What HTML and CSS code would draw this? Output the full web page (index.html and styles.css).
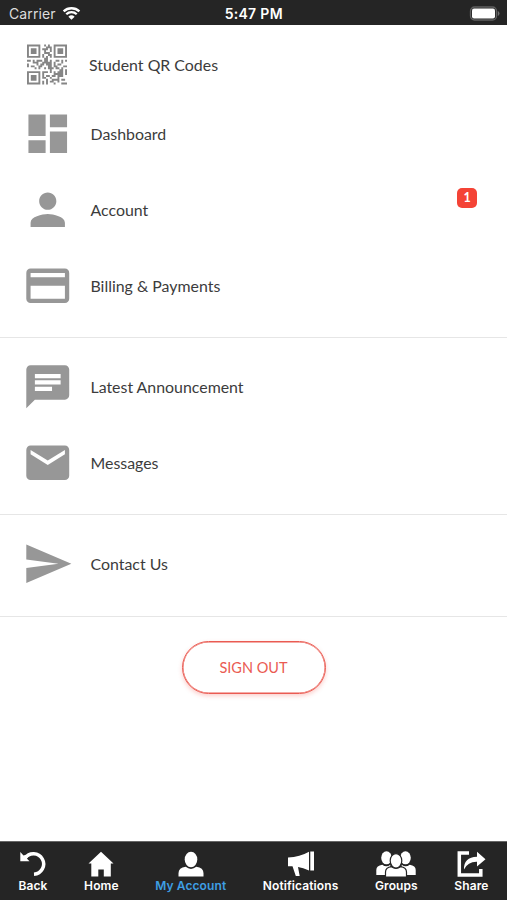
FILE: index.html
```html
<!DOCTYPE html>
<html lang="en">
<head>
<meta charset="utf-8">
<title>My Account</title>
<link rel="stylesheet" href="styles.css">
</head>
<body>
<header class="status">
  <div class="carrier"><span>Carrier</span>
    <svg class="wifi" viewBox="0 0 20 15"><path d="M1.7 5.3a12 12 0 0 1 16.6 0" /><path d="M4.5 8.3a8 8 0 0 1 11 0" /><path class="solid" d="M10 14.2 6.7 10.8a4.8 4.8 0 0 1 6.6 0Z"/></svg>
  </div>
  <div class="time">5:47 PM</div>
  <svg class="battery" viewBox="0 0 31 15"><rect class="shell" x="1.500" y="1" width="26" height="13" rx="4"/><rect class="charge" x="3" y="2.500" width="23" height="10" rx="2"/><path class="tip" d="M28.800 5v5q1.700-.8 1.700-2.500T28.800 5Z"/></svg>
</header>
<main>
  <nav class="group">
    <a class="row row-qr">
      <svg class="icon qr" viewBox="0 0 21 21"><path d="M.5.5h6v6h-6zM14.500.5h6v6h-6zM.5 14.500h6v6h-6z" class="ring"/><path d="M2 2h3v3H2zM16 2h3v3h-3zM2 16h3v3H2zM9 0h1v1H9zM11 0h1v2h-1zM8 2h2v1H8zM12 1h1v2h-1zM9 3h1v2H9zM10 4h2v1h-2zM12 3h1v1h-1zM8 5h1v2H8zM10 6h1v1h-1zM12 5h1v2h-1zM0 8h2v1H0zM3 8h1v2H3zM5 8h3v1H5zM9 7h2v2H9zM12 8h1v1h-1zM15 8h2v1h-2zM18 8h1v2h-1zM20 8h1v1h-1zM0 10h1v2H0zM2 11h2v1H2zM5 10h1v1H5zM6 11h2v1H6zM8 9h3v1H8zM10 10h3v1h-3zM14 9h1v2h-1zM16 10h2v1h-2zM19 11h2v1h-2zM4 12h1v1H4zM6 12h1v1H6zM9 12h1v1H9zM11 12h3v1h-3zM15 12h2v1h-2zM18 12h1v2h-1zM8 14h3v1H8zM12 13h1v2h-1zM14 14h1v2h-1zM16 14h1v1h-1zM20 13h1v3h-1zM8 15h1v3H8zM10 16h2v1h-2zM13 16h2v1h-2zM15 15h1v1h-1zM16 16h3v1h-3zM10 18h1v3h-1zM8 19h1v2H8zM12 17h1v1h-1zM12 19h2v1h-2zM14 18h2v1h-2zM16 17h1v3h-1zM18 18h2v1h-2zM18 20h3v1h-3zM14 20h1v1h-1zM4 9h2v1H4zM7 10h2v1H7zM11 9h2v1h-2zM11 11h2v1h-2zM14 11h2v1h-2zM17 13h2v2h-2zM16 15h3v1h-3zM13 18h1v1h-1zM9 17h1v1H9zM11 5h1v1h-1zM10 1h1v2h-1z"/></svg>
      <span>Student QR Codes</span>
    </a>
    <a class="row"><svg class="icon" viewBox="0 0 24 24"><path d="M3 13h8V3H3v10zm0 8h8v-6H3v6zm10 0h8V11h-8v10zm0-18v6h8V3h-8z"/></svg><span>Dashboard</span></a>
    <a class="row"><svg class="icon" viewBox="0 0 24 24"><path d="M12 12c2.210 0 4-1.790 4-4s-1.790-4-4-4-4 1.790-4 4 1.790 4 4 4zm0 2c-2.670 0-8 1.340-8 4v2h16v-2c0-2.660-5.330-4-8-4z"/></svg><span>Account</span><b class="badge">1</b></a>
    <a class="row"><svg class="icon" viewBox="0 0 24 24"><path d="M20 4H4c-1.110 0-1.990.89-1.990 2L2 18c0 1.110.89 2 2 2h16c1.110 0 2-.89 2-2V6c0-1.110-.89-2-2-2zm0 14H4v-6h16v6zm0-10H4V6h16v2z"/></svg><span>Billing &amp; Payments</span></a>
  </nav>
  <nav class="group">
    <a class="row"><svg class="icon" viewBox="0 0 24 24"><path d="M20 2H4c-1.100 0-1.990.9-1.990 2L2 22l4-4h14c1.100 0 2-.9 2-2V4c0-1.100-.9-2-2-2zM6 9h12v2H6V9zm8 5H6v-2h8v2zm4-6H6V6h12v2z"/></svg><span>Latest Announcement</span></a>
    <a class="row"><svg class="icon" viewBox="0 0 24 24"><path d="M20 4H4c-1.100 0-1.990.9-1.990 2L2 18c0 1.100.9 2 2 2h16c1.100 0 2-.9 2-2V6c0-1.100-.9-2-2-2zm0 4l-8 5-8-5V6l8 5 8-5v2z"/></svg><span>Messages</span></a>
  </nav>
  <nav class="group">
    <a class="row"><svg class="icon" viewBox="0 0 24 24"><path d="M2.010 21L23 12 2.010 3 2 10l15 2-15 2z"/></svg><span>Contact Us</span></a>
  </nav>
  <button class="signout">SIGN OUT</button>
</main>
<footer class="tabs">
  <a class="tab back"><svg viewBox="0 0 26 26"><path class="arc" d="M5 7.300A10.200 10.200 0 1 1 14 23.200"/><path d="M.3 1v9.300h9.200L6.800 7.500l1.500-1.800-2.200-1.900L3.500 4.500z"/></svg><span>Back</span></a>
  <a class="tab home"><svg viewBox="0 0 26 26"><path d="M13 .8 25.500 12.500H22.800V25.500H15.800V18.500H10.300V25.500H3.300V12.500H.5Z"/></svg><span>Home</span></a>
  <a class="tab account active"><svg viewBox="0 0 26 26"><ellipse cx="13" cy="8.500" rx="6.300" ry="7.800"/><path d="M.5 25.500v-3.200q0-5.800 7.200-6.500Q13 20 18.300 15.800q7.200.7 7.200 6.500v3.200Z"/></svg><span>My Account</span></a>
  <a class="tab notes"><svg viewBox="0 0 28 26"><path d="M1 6.500Q13 6 22 .8V19.500Q16 16.800 11 16l1.700 9H8.800L5.500 15.300H1ZM23.300.5h3.700v19h-3.700Z"/></svg><span>Notifications</span></a>
  <a class="tab groups"><svg viewBox="0 0 40 26"><ellipse cx="10.500" cy="6.800" rx="5.300" ry="6.500"/><ellipse cx="29.500" cy="6.800" rx="5.300" ry="6.500"/><path d="M.3 24v-5q0-4.500 6-5.300 4 3 8 0V24ZM39.700 24v-5q0-4.500-6-5.300-4 3-8 0V24Z"/><path class="front" d="M9.500 26v-5q0-4.500 6-5.300Q20 19 24.500 15.700 30.500 16.500 30.500 21v5Z"/><ellipse class="front" cx="20" cy="9.800" rx="5.800" ry="7.200"/></svg><span>Groups</span></a>
  <a class="tab share"><svg viewBox="0 0 29 26"><path class="box" d="M12 2H2.300v22h21.500v-6"/><path d="M7 18.500Q6.500 6.300 20 5.800V.8L28.500 8.300 20 15.500V10.800Q11 10.500 7 18.500Z"/></svg><span>Share</span></a>
</footer>
</body>
</html>
```
FILE: styles.css
```css
* { box-sizing: border-box; }
body {
  margin: 0;
  height: 900px;
  display: flex;
  flex-direction: column;
  background: #fff;
  overflow: hidden;
  font-family: Lato, sans-serif;
  color: #3c3c3c;
}
.status {
  height: 25px;
  flex: none;
  background: #252525;
  color: #fff;
  display: grid;
  grid-template-columns: 1fr auto 1fr;
  align-items: center;
  padding: 2px 7px 0 9px;
  font: 14px/20px Inter, sans-serif;
}
.carrier { display: flex; align-items: center; gap: 6px; color: #ddd; letter-spacing: .1px; }
.wifi { width: 19px; height: 15px; fill: none; stroke: #fff; stroke-width: 2.500; }
.wifi .solid { fill: #fff; stroke: none; }
.time { font-weight: 600; letter-spacing: .3px; margin-right: 1.500px; }
.battery { width: 31px; height: 15px; justify-self: end; }
.shell { fill: none; stroke: #606060; stroke-width: 1.300; }
.charge { fill: #fff; }
.tip { fill: #707070; }
main { flex: 1; display: flex; flex-direction: column; }
.group { padding: 11px 0 13px; border-bottom: 1px solid #e6e6e6; }
.group:first-child { padding-top: 9px; }
.group:last-of-type { padding-bottom: 14px; }
.row {
  height: 76px;
  display: flex;
  align-items: center;
  padding: 0 30px 0 21.500px;
  font-size: 15.900px;
  line-height: 20px;
}
.row-qr { height: 62px; padding: 0 30px 1px 21.500px; }
.icon { width: 51.500px; height: 51.500px; fill: #979797; margin-right: 17.500px; flex: none; }
.icon.qr { width: 40px; height: 41px; margin: 0 22px 0 5.500px; fill: #858585; }
.ring { fill: none; stroke: #858585; stroke-width: 1; }
.badge {
  width: 20px;
  height: 20px;
  margin: -25px 0 0 auto;
  border-radius: 5px;
  background: #f44336;
  color: #fff;
  font-size: 12.500px;
  text-align: center;
}
.signout {
  width: 144px;
  height: 53px;
  margin: 24px auto 0;
  border: 1px solid #ea5b52;
  border-radius: 27px;
  background: #fff;
  color: #ea5b52;
  font: 14.500px Lato, sans-serif;
  box-shadow: inset 0 0 0 .5px #ea5b52, 0 2px 4px #f4433640;
}
.tabs {
  height: 59px;
  flex: none;
  background: #252525;
  color: #fff;
  border-top: 1px solid #666;
  display: flex;
  justify-content: space-between;
  padding: 9px 18.500px 0 18.500px;
}
.tab {
  display: flex;
  flex-direction: column;
  align-items: center;
  font: 600 12px/16px Inter, sans-serif;
  letter-spacing: .1px;
}
.tab svg { height: 26px; fill: #fff; margin-bottom: 1px; }
.active { color: #3e9fe4; }
.tab .arc { fill: none; stroke: #fff; stroke-width: 3.500; }
.tab .box { fill: none; stroke: #fff; stroke-width: 3.500; }
.tab .front { stroke: #252525; stroke-width: 1.200; }
```
